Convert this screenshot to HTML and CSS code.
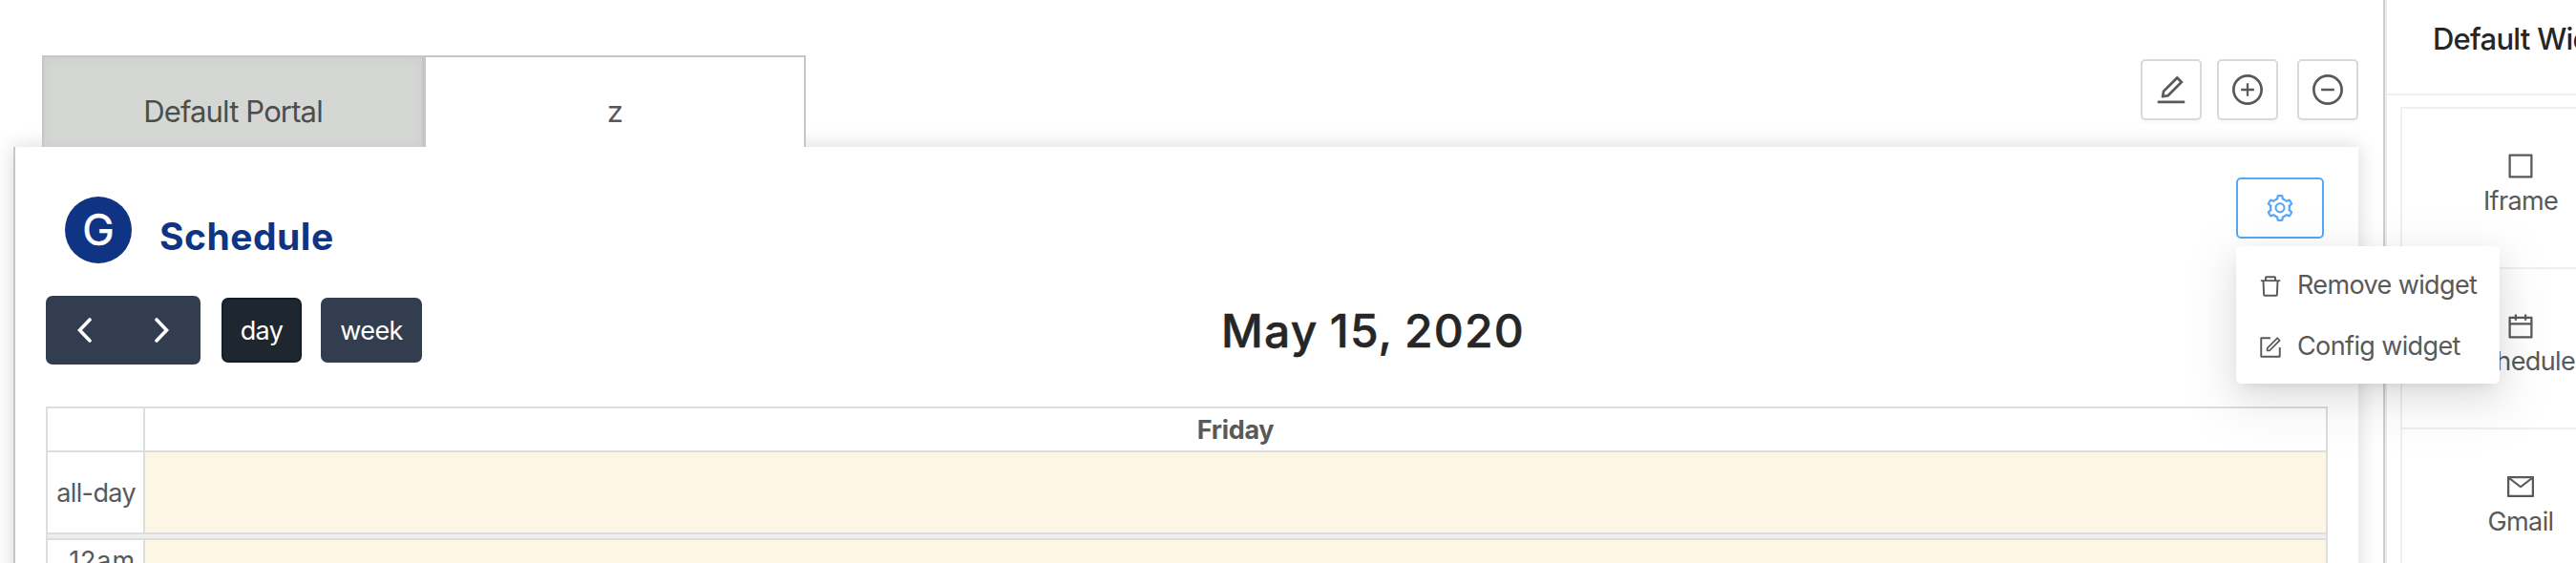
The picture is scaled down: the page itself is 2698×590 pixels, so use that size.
FILE: index.html
```html
<!DOCTYPE html>
<html lang="en">
<head>
<meta charset="utf-8">
<title>Portal</title>
<link rel="stylesheet" href="styles.css">
</head>
<body>
<div class="app">
  <main class="main">
    <header class="topbar">
      <nav class="tabs">
        <div class="tab tab-inactive"><span class="tab-label">Default Portal</span></div>
        <div class="tab tab-active"><span>z</span></div>
      </nav>
      <div class="tools">
        <button class="tool"><svg class="icon" viewBox="64 64 896 896"><path d="M257.7 752c2 0 4-.2 6-.5L431.9 722c2-.4 3.9-1.3 5.3-2.8l423.9-423.9a9.96 9.96 0 0 0 0-14.1L694.9 114.9c-1.9-1.9-4.4-2.9-7.1-2.9s-5.2 1-7.1 2.9L256.8 538.8c-1.5 1.5-2.4 3.3-2.8 5.3l-29.5 168.2a33.5 33.5 0 0 0 9.4 29.8c6.6 6.4 14.9 9.9 23.8 9.9zm67.4-174.4L687.8 215l73.3 73.3-362.7 362.6-88.9 15.7 15.6-89zM880 836H144c-17.7 0-32 14.3-32 32v36c0 4.4 3.6 8 8 8h784c4.4 0 8-3.6 8-8v-36c0-17.7-14.3-32-32-32z"/></svg></button>
        <button class="tool"><svg class="icon" viewBox="64 64 896 896"><path d="M696 480H544V328c0-4.4-3.6-8-8-8h-48c-4.4 0-8 3.6-8 8v152H328c-4.4 0-8 3.6-8 8v48c0 4.4 3.6 8 8 8h152v152c0 4.4 3.6 8 8 8h48c4.4 0 8-3.6 8-8V544h152c4.4 0 8-3.6 8-8v-48c0-4.4-3.6-8-8-8z"/><path d="M512 64C264.6 64 64 264.6 64 512s200.6 448 448 448 448-200.6 448-448S759.4 64 512 64zm0 820c-205.4 0-372-166.6-372-372s166.6-372 372-372 372 166.6 372 372-166.6 372-372 372z"/></svg></button>
        <button class="tool tool-last"><svg class="icon" viewBox="64 64 896 896"><path d="M696 480H328c-4.400 0-8 3.600-8 8v48c0 4.400 3.600 8 8 8h368c4.400 0 8-3.600 8-8v-48c0-4.400-3.600-8-8-8z"/><path d="M512 64C264.6 64 64 264.6 64 512s200.600 448 448 448 448-200.600 448-448S759.400 64 512 64zm0 820c-205.400 0-372-166.600-372-372s166.600-372 372-372 372 166.600 372 372-166.600 372-372 372z"/></svg></button>
      </div>
    </header>

    <section class="panel">
      <div class="widget-head">
        <div class="avatar">G</div>
        <h2 class="widget-title">Schedule</h2>
        <div class="settings">
          <button class="settings-btn"><svg class="icon" viewBox="64 64 896 896"><path d="M924.8 625.7l-65.5-56c3.1-19 4.7-38.4 4.7-57.8s-1.6-38.8-4.7-57.8l65.5-56a32.03 32.03 0 0 0 9.3-35.2l-.9-2.6a443.74 443.74 0 0 0-79.7-137.9l-1.8-2.1a32.12 32.12 0 0 0-35.1-9.5l-81.3 28.9c-30-24.6-63.5-44-99.7-57.6l-15.7-85a32.05 32.05 0 0 0-25.8-25.7l-2.7-.5c-52.1-9.4-106.900-9.400-159 0l-2.700.5a32.05 32.05 0 0 0-25.800 25.700l-15.800 85.400a351.860 351.860 0 0 0-99 57.400l-81.900-29.100a32 32 0 0 0-35.100 9.500l-1.800 2.100a446.020 446.020 0 0 0-79.700 137.900l-.9 2.600c-4.500 12.500-.8 26.500 9.300 35.200l66.300 56.600c-3.100 18.800-4.600 38-4.600 57.100 0 19.200 1.500 38.400 4.600 57.100L99 625.5a32.03 32.03 0 0 0-9.300 35.200l.9 2.600c18.100 50.400 44.900 96.900 79.700 137.900l1.800 2.100a32.12 32.12 0 0 0 35.100 9.500l81.900-29.100c29.800 24.500 63.100 43.900 99 57.400l15.800 85.400a32.05 32.05 0 0 0 25.800 25.700l2.700.5a449.400 449.400 0 0 0 159 0l2.700-.5a32.05 32.05 0 0 0 25.800-25.700l15.700-85a350 350 0 0 0 99.700-57.600l81.300 28.900a32 32 0 0 0 35.100-9.500l1.800-2.100c34.800-41.100 61.600-87.500 79.700-137.900l.9-2.600c4.500-12.300.8-26.300-9.300-35zM788.3 465.900c2.500 15.100 3.800 30.600 3.800 46.100s-1.300 31-3.800 46.100l-6.600 40.100 74.700 63.900a370.030 370.030 0 0 1-42.600 73.600L721 702.800l-31.400 25.800c-23.900 19.600-50.500 35-79.300 45.800l-38.100 14.300-17.900 97a377.500 377.500 0 0 1-85 0l-17.900-97.200-37.800-14.500c-28.500-10.800-55-26.200-78.700-45.700l-31.400-25.900-93.400 33.200c-17-22.900-31.200-47.600-42.600-73.600l75.500-64.500-6.500-40c-2.400-14.900-3.700-30.300-3.700-45.500 0-15.300 1.200-30.600 3.700-45.500l6.500-40-75.500-64.500c11.300-26.100 25.600-50.700 42.600-73.600l93.400 33.200 31.400-25.900c23.700-19.500 50.200-34.900 78.700-45.700l37.900-14.300 17.900-97.200c28.100-3.200 56.800-3.200 85 0l17.900 97 38.100 14.300c28.700 10.800 55.400 26.200 79.300 45.800l31.400 25.800 92.800-32.900c17 22.900 31.200 47.600 42.600 73.600L781.800 426l6.500 39.900zM512 326c-97.200 0-176 78.800-176 176s78.800 176 176 176 176-78.800 176-176-78.800-176-176-176zm79.200 255.200A111.600 111.600 0 0 1 512 614c-29.900 0-58-11.700-79.200-32.800A111.600 111.600 0 0 1 400 502c0-29.900 11.700-58 32.800-79.200C454 401.600 482.100 390 512 390c29.900 0 58 11.600 79.200 32.800A111.600 111.600 0 0 1 624 502c0 29.900-11.700 58-32.800 79.200z"/></svg></button>
          <div class="menu">
            <div class="menu-item"><svg class="icon" viewBox="64 64 896 896"><path d="M360 184h-8c4.400 0 8-3.600 8-8v8h304v-8c0 4.400 3.600 8 8 8h-8v72h72v-80c0-35.300-28.700-64-64-64H352c-35.300 0-64 28.700-64 64v80h72v-72zm504 72H160c-17.700 0-32 14.300-32 32v32c0 4.400 3.600 8 8 8h60.400l24.700 523c1.600 34.100 29.800 61 63.900 61h454c34.200 0 62.300-26.800 63.900-61l24.700-523H888c4.400 0 8-3.600 8-8v-32c0-17.700-14.300-32-32-32zM731.300 840H292.700l-24.200-512h487l-24.200 512z"/></svg><span>Remove widget</span></div>
            <div class="menu-item"><svg class="icon" viewBox="64 64 896 896"><path d="M904 512h-56c-4.400 0-8 3.600-8 8v320H184V184h320c4.400 0 8-3.600 8-8v-56c0-4.400-3.600-8-8-8H144c-17.700 0-32 14.300-32 32v736c0 17.700 14.300 32 32 32h736c17.700 0 32-14.300 32-32V520c0-4.400-3.600-8-8-8z"/><path d="M355.900 534.900L354 653.800c-.1 8.900 7.100 16.200 16 16.200h.4l118-2.900c2-.1 4-.9 5.400-2.300l415.900-415c3.100-3.100 3.100-8.200 0-11.300L785.400 114.300c-1.600-1.600-3.600-2.300-5.700-2.300s-4.100.8-5.700 2.300l-415.800 415a8.300 8.300 0 0 0-2.300 5.600zm63.500 23.600L779.700 199l45.200 45.100-360.500 359.700-45.700 1.100.7-46.400z"/></svg><span>Config widget</span></div>
          </div>
        </div>
      </div>

      <div class="cal-toolbar">
        <div class="cal-left">
          <div class="btn-group">
            <button class="nav-btn"><svg class="chevron" viewBox="0 0 16 26"><path d="M13 2 2.500 13 13 24"/></svg></button>
            <button class="nav-btn"><svg class="chevron" viewBox="0 0 16 26"><path d="M2 2 12.500 13 2 24"/></svg></button>
          </div>
          <button class="view-btn view-day">day</button>
          <button class="view-btn view-week">week</button>
        </div>
        <h2 class="cal-title">May 15, 2020</h2>
      </div>

      <div class="grid">
        <div class="row row-head"><div class="axis"></div><div class="cell cell-head">Friday</div></div>
        <div class="row row-allday"><div class="axis">all-day</div><div class="cell today"></div></div>
        <div class="divider"></div>
        <div class="row row-hour"><div class="axis">12am</div><div class="cell today"></div></div>
      </div>
    </section>
  </main>

  <aside class="side">
    <h3 class="side-title">Default Widgets</h3>
    <div class="cards">
      <div class="card"><svg class="icon" viewBox="64 64 896 896"><path d="M880 112H144c-17.700 0-32 14.300-32 32v736c0 17.700 14.300 32 32 32h736c17.700 0 32-14.300 32-32V144c0-17.700-14.300-32-32-32zm-40 728H184V184h656v656z"/></svg><span>Iframe</span></div>
      <div class="card"><svg class="icon" viewBox="64 64 896 896"><path d="M880 184H712v-64c0-4.400-3.600-8-8-8h-56c-4.400 0-8 3.600-8 8v64H384v-64c0-4.400-3.600-8-8-8h-56c-4.400 0-8 3.600-8 8v64H144c-17.700 0-32 14.300-32 32v664c0 17.700 14.300 32 32 32h736c17.700 0 32-14.300 32-32V216c0-17.700-14.300-32-32-32zm-40 656H184V460h656v380zM184 392V256h128v48c0 4.400 3.600 8 8 8h56c4.400 0 8-3.600 8-8v-48h256v48c0 4.400 3.600 8 8 8h56c4.400 0 8-3.600 8-8v-48h128v136H184z"/></svg><span>Schedule</span></div>
      <div class="card"><svg class="icon" viewBox="64 64 896 896"><path d="M928 160H96c-17.700 0-32 14.300-32 32v640c0 17.700 14.300 32 32 32h832c17.700 0 32-14.300 32-32V192c0-17.700-14.300-32-32-32zm-40 110.800V792H136V270.800l-27.600-21.500 39.300-50.500 42.800 33.300h643.100l42.800-33.300 39.300 50.500-27.700 21.500zM833.600 232L512 482 190.400 232l-42.800-33.300-39.300 50.500 27.600 21.500 341.600 265.600a55.990 55.990 0 0 0 68.700 0L888 270.800l27.600-21.500-39.300-50.500-42.700 33.200z"/></svg><span>Gmail</span></div>
    </div>
  </aside>
</div>
</body>
</html>
```
FILE: styles.css
```css
* { box-sizing: border-box; }

body {
  margin: 0;
  background: #fff;
  color: #595959;
  font: 27px/42px Inter, "Liberation Sans", sans-serif;
  letter-spacing: -0.62px;
}

button { margin: 0; padding: 0; font: inherit; letter-spacing: inherit; color: inherit; }
h2, h3 { margin: 0; }
.icon { display: block; width: 28px; height: 28px; fill: currentColor; flex: none; }

.app { display: flex; height: 590px; width: 2698px; overflow: hidden; }
.main { width: 2496px; flex: none; padding: 58px 26px 0 14px; }

/* Tabs and portal tools */
.topbar { display: flex; justify-content: space-between; height: 96px; padding-left: 30px; }
.tabs { display: flex; }
.tab {
  width: 400px;
  border: 2px solid #c5c6c5;
  border-bottom: 0;
  display: flex;
  justify-content: center;
  padding-top: 36px;
  font-size: 31px;
  position: relative;
}
.tab-inactive { background: #d5d7d5; color: #4c4e4c; box-shadow: inset 0 0 14px rgba(0, 0, 0, .05); }
.tab-active { z-index: 1; background: #fff; }
.tab-label { letter-spacing: -0.85px; }
.tools { display: flex; gap: 16px; padding-top: 4px; }
.tool {
  width: 64px;
  height: 64px;
  display: flex;
  align-items: center;
  justify-content: center;
  background: #fff;
  border: 2px solid #d9d9d9;
  border-radius: 5px;
  box-shadow: 0 4px 0 rgba(0, 0, 0, .016);
}
.tool .icon { width: 32px; height: 32px; }
.tool-last { margin-left: 4px; }

/* Widget panel */
.panel {
  height: 500px;
  background: #fff;
  border-left: 2px solid #c5c6c5;
  box-shadow: 0 0 20px rgba(0, 0, 0, .16);
  padding: 32px 32px 0;
}
.widget-head { display: flex; height: 124px; }
.avatar {
  width: 70px;
  height: 70px;
  margin: 20px 0 0 20px;
  border-radius: 50%;
  background: #103484;
  color: #fff;
  font-size: 45px;
  -webkit-text-stroke: 0.5px #fff;
  line-height: 70px;
  text-align: center;
  letter-spacing: 0;
}
.widget-title {
  margin: 38px auto 0 29px;
  color: #103484;
  font-size: 39px;
  line-height: 48px;
  font-weight: 700;
  letter-spacing: 0.5px;
}
.settings { position: relative; margin-right: 4px; }
.settings-btn {
  width: 92px;
  height: 64px;
  display: flex;
  align-items: center;
  justify-content: center;
  background: #fff;
  border: 2px solid #57a8f8;
  border-radius: 5px;
  color: #57a8f8;
}
.menu {
  position: absolute;
  z-index: 5;
  top: 72px;
  left: 0;
  width: 276px;
  height: 144px;
  padding: 8px 0;
  border-radius: 5px;
  background: #fff;
  box-shadow: 0 6px 12px -8px rgba(0, 0, 0, .12), 0 12px 32px rgba(0, 0, 0, .09), 0 18px 56px 16px rgba(0, 0, 0, .05);
}
.menu-item { display: flex; align-items: center; height: 64px; padding-left: 24px; white-space: nowrap; }
.menu-item .icon { width: 24px; height: 24px; margin: 4px 16px 0 0; }
.menu-item span { padding-top: 2px; }

/* Calendar toolbar */
.cal-toolbar { display: flex; align-items: center; height: 72px; }
.cal-left { display: flex; align-items: center; }
.btn-group { display: flex; width: 162px; height: 72px; border-radius: 7px; background: #323e4f; }
.nav-btn { width: 81px; display: flex; align-items: center; justify-content: center; background: none; border: 0; }
.chevron { width: 16px; height: 26px; fill: none; stroke: #fff; stroke-width: 3.600; stroke-linecap: round; }
.view-btn { height: 68px; padding-top: 2px; border-radius: 7px; border: 2px solid #323e4f; background: #323e4f; color: #fff; }
.view-day { width: 84px; margin-left: 22px; border-color: #151e27; background: #1e262f; }
.view-week { width: 106px; margin-left: 20px; }
.cal-title {
  margin-left: 837px;
  padding-top: 2px;
  color: #262626;
  font-size: 48px;
  line-height: 60px;
  font-weight: 500;
  -webkit-text-stroke: 0.5px #262626;
  letter-spacing: 1.25px;
  word-spacing: -2px;
  white-space: nowrap;
}

/* Day grid */
.grid { margin-top: 44px; border: 2px solid #dcdddd; }
.row { display: flex; border-bottom: 2px solid #dcdddd; }
.axis { width: 102px; flex: none; border-right: 2px solid #dcdddd; text-align: right; padding-right: 8px; }
.cell { flex: 1; }
.cell-head { padding-top: 2px; text-align: center; font-weight: 700; letter-spacing: -0.3px; }
.row-head { height: 46px; }
.row-allday { height: 86px; line-height: 85px; }
.today { background: #fef6e4; }
.divider { height: 6px; background: #eee; border-bottom: 2px solid #dcdddd; }
.row-hour { height: 100px; line-height: 44px; letter-spacing: 0.9px; }

/* Widget catalogue */
.side { flex: none; width: 300px; border-left: 2px solid #cfcfcf; box-shadow: inset 2px 0 0 #ececec; padding-left: 2px; }
.side-title {
  height: 100px;
  padding: 20px 0 0 48px;
  border-bottom: 2px solid #efefef;
  color: #262626;
  font-size: 31px;
  font-weight: 500;
  letter-spacing: -0.75px;
  white-space: nowrap;
}
.cards { margin: 12px 0 0 14px; border: 2px solid #efefef; width: 252px; height: 600px; }
.card {
  height: 168px;
  border-bottom: 2px solid #efefef;
  display: flex;
  flex-direction: column;
  align-items: center;
  padding-top: 46px;
}
.card span { margin-top: 2px; }
```
